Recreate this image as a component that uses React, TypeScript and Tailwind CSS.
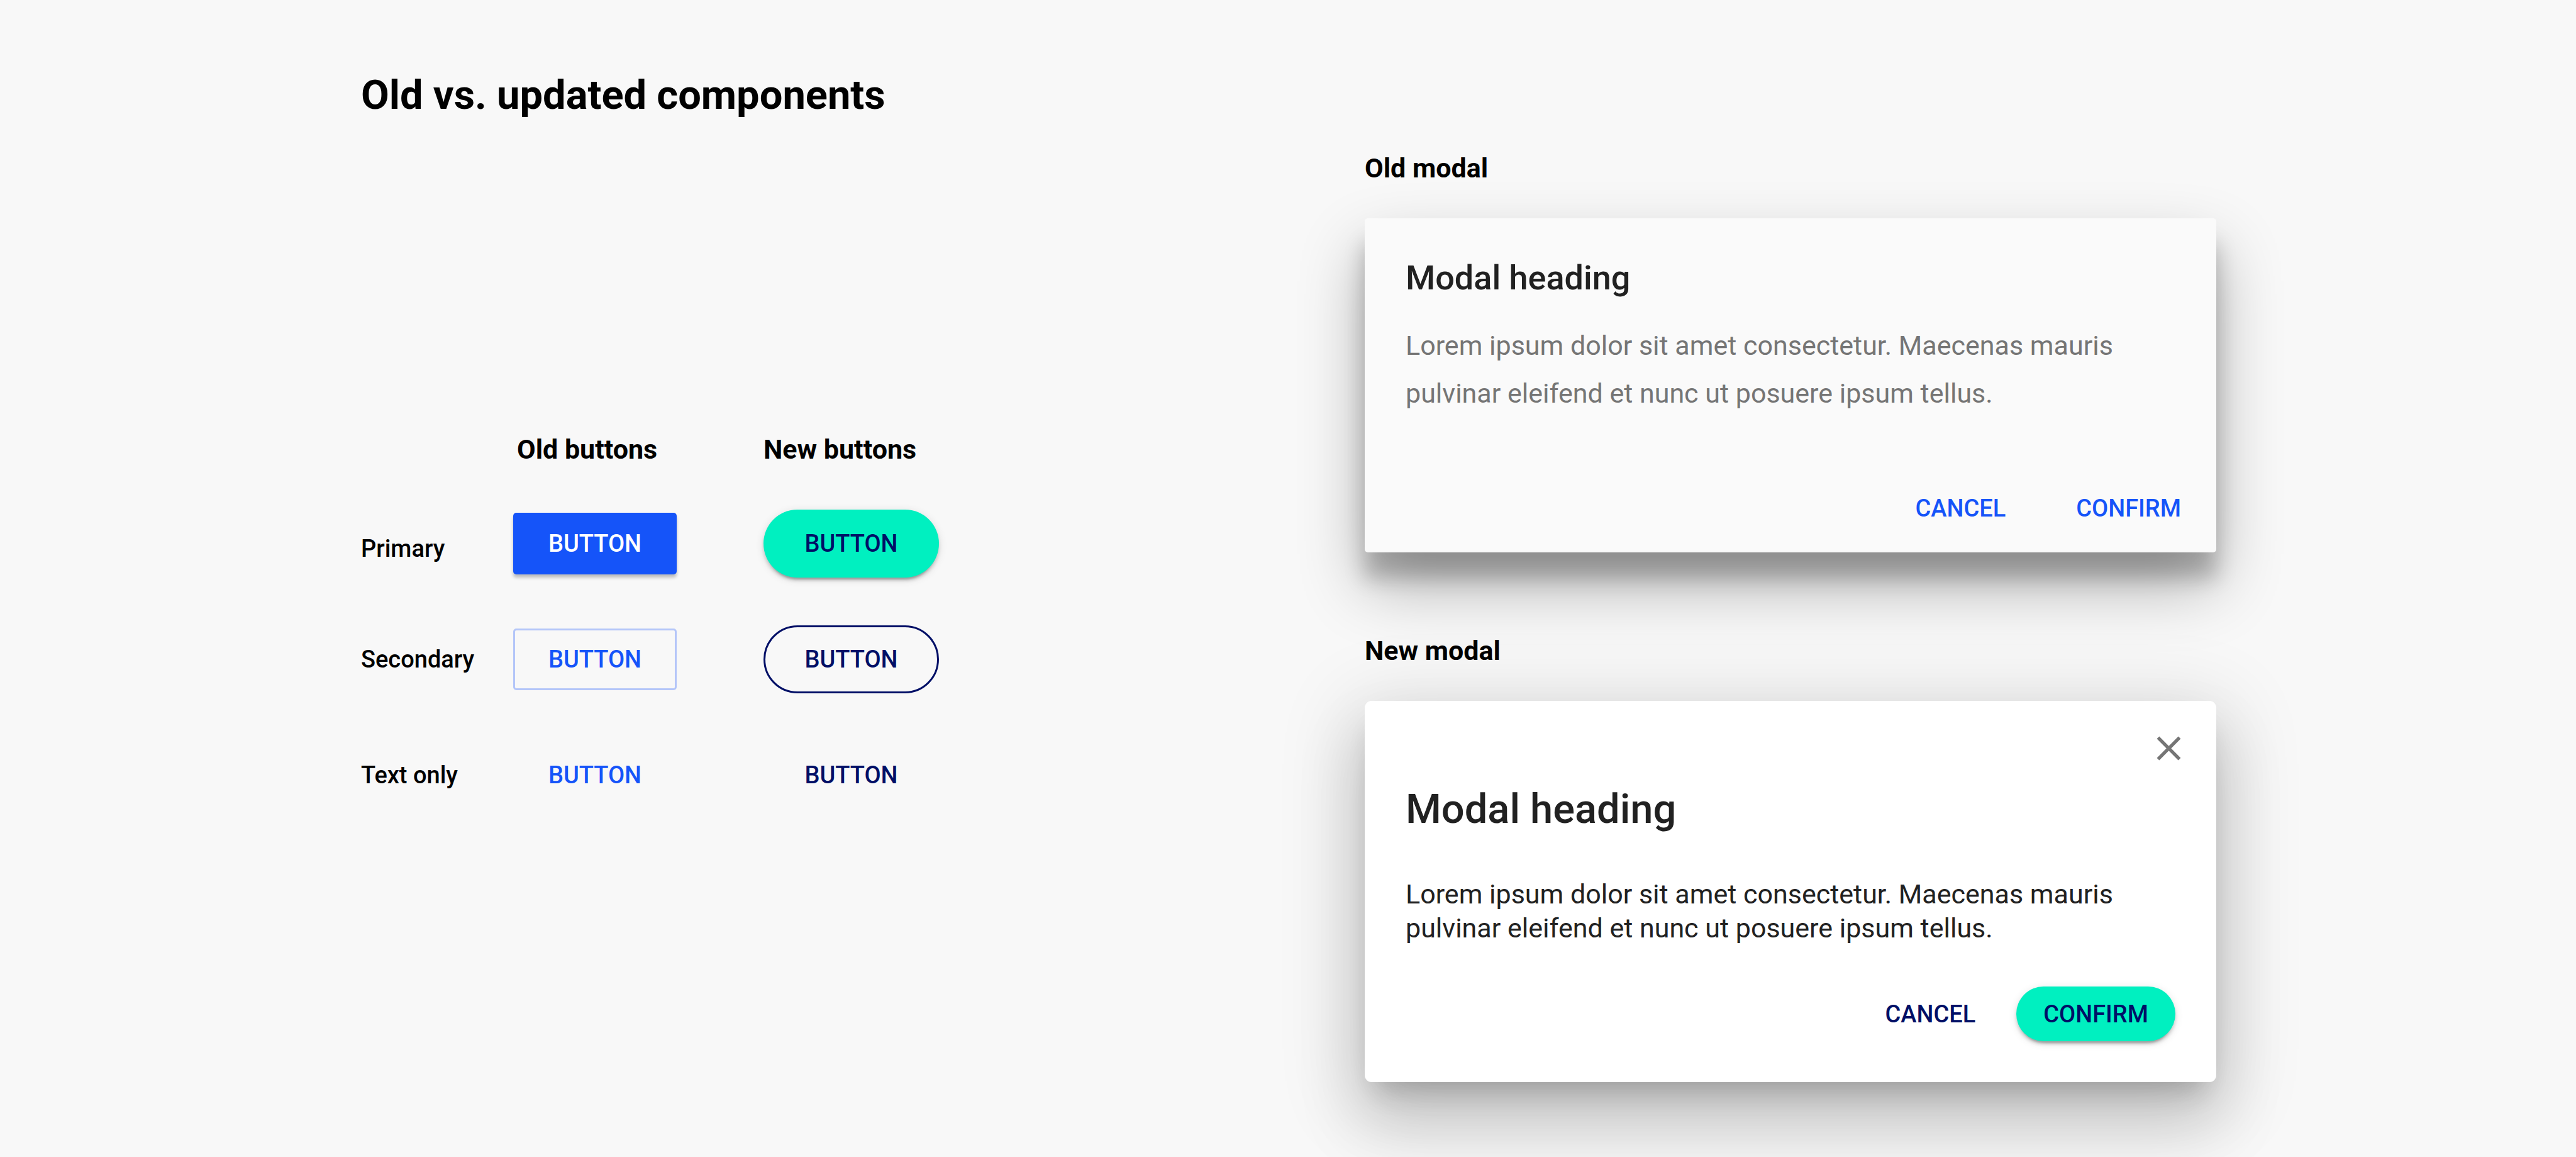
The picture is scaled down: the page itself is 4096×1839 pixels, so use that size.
import type { ReactNode } from "react";

type Variant = "oldPrimary" | "oldSecondary" | "oldText" | "newPrimary" | "newSecondary" | "newText";

const variants: Record<Variant, string> = {
  oldPrimary:
    "h-[98px] w-[260px] rounded-[5px] bg-[#1554f9] text-white shadow-[0_5px_5px_rgba(0,0,0,0.24)]",
  oldSecondary: "h-[98px] w-[260px] rounded-[5px] border-3 border-[#b4c6f9] text-[#1554f9]",
  oldText: "h-[98px] w-[260px] rounded-[5px] text-[#1554f9]",
  newPrimary:
    "h-[108px] w-[279px] rounded-full bg-[#00f0c0] text-[#000f66] shadow-[0_8px_3px_-5px_rgba(0,0,0,0.2),0_5px_5px_rgba(0,0,0,0.14),0_3px_14px_rgba(0,0,0,0.12)]",
  newSecondary: "h-[108px] w-[279px] rounded-full border-3 border-[#000f66] text-[#000f66]",
  newText: "h-[108px] w-[279px] rounded-full text-[#000f66]",
};

function SampleButton({ variant }: { variant: Variant }) {
  return (
    <button type="button" className={`text-[38px] leading-[44px] font-medium ${variants[variant]}`}>
      BUTTON
    </button>
  );
}

function SectionHeading({ children }: { children: ReactNode }) {
  return <h2 className="text-[43px] leading-[52px] font-bold">{children}</h2>;
}

const rows: { label: string; labelClass: string; oldVariant: Variant; newVariant: Variant }[] = [
  { label: "Primary", labelClass: "pt-4", oldVariant: "oldPrimary", newVariant: "newPrimary" },
  { label: "Secondary", labelClass: "", oldVariant: "oldSecondary", newVariant: "newSecondary" },
  { label: "Text only", labelClass: "", oldVariant: "oldText", newVariant: "newText" },
];

function ButtonComparison() {
  return (
    <section className="mt-[503px] grid grid-cols-[242px_398px_279px] items-center gap-y-[76px]">
      <h2 className="col-start-2 pl-1.5 text-[43px] leading-[40px] font-bold">Old buttons</h2>
      <h2 className="text-[43px] leading-[40px] font-bold">New buttons</h2>
      {rows.map((row) => (
        <div key={row.label} className="contents">
          <h3 className={`text-[38px] leading-[44px] font-medium ${row.labelClass}`}>{row.label}</h3>
          <div>
            <SampleButton variant={row.oldVariant} />
          </div>
          <SampleButton variant={row.newVariant} />
        </div>
      ))}
    </section>
  );
}

const bodyText =
  "Lorem ipsum dolor sit amet consectetur. Maecenas mauris pulvinar eleifend et nunc ut posuere ipsum tellus.";

function OldModal() {
  return (
    <div
      role="dialog"
      aria-labelledby="old-modal-title"
      className="mt-[54px] rounded-[5px] bg-[#fafafa] pt-[63px] pb-[21px] shadow-[0_41px_33px_rgba(0,0,0,0.22),0_51px_103px_rgba(0,0,0,0.3)]"
    >
      <div className="px-[65px]">
        <h3 id="old-modal-title" className="text-[54px] leading-[64px] font-medium text-[#212121]">
          Modal heading
        </h3>
        <p className="mt-[37px] text-[43px] leading-[76px] text-[#757575]">{bodyText}</p>
      </div>
      <div className="mt-24 flex justify-end gap-12 pr-6">
        <button type="button" className="h-[98px] px-8 text-[38px] leading-[44px] font-medium text-[#1554f9]">
          CANCEL
        </button>
        <button type="button" className="h-[98px] px-8 text-[38px] leading-[44px] font-medium text-[#1554f9]">
          CONFIRM
        </button>
      </div>
    </div>
  );
}

function NewModal() {
  return (
    <div
      role="dialog"
      aria-labelledby="new-modal-title"
      className="mt-[54px] rounded-[11px] bg-white px-[43px] pt-[43px] pb-[65px] shadow-[0_30px_41px_-19px_rgba(0,0,0,0.2),0_65px_103px_8px_rgba(0,0,0,0.14),0_24px_125px_22px_rgba(0,0,0,0.12)]"
    >
      <div className="flex justify-end">
        <button type="button" aria-label="Close" className="text-[#757575]">
          <svg viewBox="0 0 24 24" fill="currentColor" className="size-[65px]" aria-hidden="true">
            <path d="M19 6.41 17.59 5 12 10.59 6.41 5 5 6.41 10.59 12 5 17.59 6.41 19 12 13.41 17.59 19 19 17.59 13.41 12z" />
          </svg>
        </button>
      </div>
      <div className="px-[22px]">
        <h3 id="new-modal-title" className="mt-6 text-[65px] leading-[80px] font-medium text-[#212121]">
          Modal heading
        </h3>
        <p className="mt-[68px] text-[43px] leading-[54px] text-[#212121]">{bodyText}</p>
        <div className="mt-[66px] flex justify-end gap-[22px]">
          <button type="button" className="h-[87px] px-[43px] text-[38px] leading-[44px] font-medium text-[#000f66]">
            CANCEL
          </button>
          <button
            type="button"
            className="h-[87px] rounded-full bg-[#00f0c0] px-[43px] text-[38px] leading-[44px] font-medium text-[#000f66] shadow-[0_8px_3px_-5px_rgba(0,0,0,0.2),0_5px_5px_rgba(0,0,0,0.14),0_3px_14px_rgba(0,0,0,0.12)]"
          >
            CONFIRM
          </button>
        </div>
      </div>
    </div>
  );
}

export default function App() {
  return (
    <div className="min-h-screen overflow-hidden bg-[#f8f8f8] font-['Roboto',sans-serif] text-black">
      <main className="mx-auto flex max-w-[2952px] items-start justify-between gap-24 pl-0.5">
        <div className="shrink-0 pt-[111px]">
          <h1 className="text-[65px] leading-[80px] font-bold">Old vs. updated components</h1>
          <ButtonComparison />
        </div>
        <div className="w-full max-w-[1354px] pt-[241px]">
          <SectionHeading>Old modal</SectionHeading>
          <OldModal />
          <div className="mt-[130px]">
            <SectionHeading>New modal</SectionHeading>
            <NewModal />
          </div>
        </div>
      </main>
    </div>
  );
}
